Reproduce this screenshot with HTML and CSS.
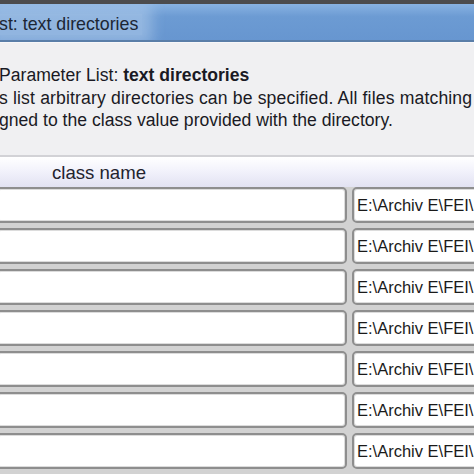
FILE: index.html
```html
<!DOCTYPE html>
<html>
<head>
<meta charset="utf-8">
<link rel="stylesheet" href="styles.css">
</head>
<body>
<div class="window">
  <div class="titlebar"><span class="title">st: text directories</span></div>
  <div class="desc">
    <div class="line">Parameter List: <b>text directories</b></div>
    <div class="line wide">s list arbitrary directories can be specified. All files matching</div>
    <div class="line">gned to the class value provided with the directory.</div>
  </div>
  <div class="table">
    <div class="thead"><span class="th">class name</span></div>
    <div class="rows">
      <div class="cell"></div><div class="cell path">E:\Archiv E\FEI\</div>
      <div class="cell"></div><div class="cell path">E:\Archiv E\FEI\</div>
      <div class="cell"></div><div class="cell path">E:\Archiv E\FEI\</div>
      <div class="cell"></div><div class="cell path">E:\Archiv E\FEI\</div>
      <div class="cell"></div><div class="cell path">E:\Archiv E\FEI\</div>
      <div class="cell"></div><div class="cell path">E:\Archiv E\FEI\</div>
      <div class="cell"></div><div class="cell path">E:\Archiv E\FEI\</div>
    </div>
  </div>
</div>
</body>
</html>
```
FILE: styles.css
```css
html, body {
  margin: 0;
  padding: 0;
  width: 474px;
  height: 474px;
  overflow: hidden;
  background: #cfcfcf;
}
.window {
  width: 474px;
  height: 474px;
  overflow: hidden;
  font-family: "Liberation Sans", Arial, sans-serif;
}
.titlebar {
  height: 36px;
  border-top: 4px solid #4c4c4e;
  border-bottom: 2px solid #5a7ea8;
  box-shadow: 0 1px 0 #c4d2e2;
  background: linear-gradient(#88b2e2, #6c9bd3 35%, #6796d0 100%);
  display: flex;
  align-items: center;
  overflow: hidden;
  white-space: nowrap;
}
.title {
  font-size: 17.8px;
  color: #1c2634;
  margin-left: -1px;
  margin-top: 4px;
  padding: 0 4px 0 0;
  background: rgba(196, 218, 242, 0.45);
  box-shadow: 0 0 14px 10px rgba(196, 218, 242, 0.45);
}
.desc {
  background: #f0f0f2;
  padding: 21px 0 0 0;
  height: 91px;
  border-top: 1px solid #f7f7f9;
  border-bottom: 2px solid #d2d2d6;
  overflow: hidden;
}
.line {
  font-size: 17.6px;
  line-height: 22.5px;
  color: #1a1a24;
  white-space: nowrap;
  margin-left: -1px;
}
.wide {
  letter-spacing: 0.15px;
}
.table {
  background: #fff;
}
.thead {
  height: 30px;
  background: linear-gradient(#ffffff, #f1f1fb 50%, #e2e2f2);
  display: flex;
  align-items: center;
}
.th {
  font-size: 18.6px;
  color: #23232e;
  margin-left: 52px;
  margin-top: 2px;
}
.rows {
  display: grid;
  grid-template-columns: 351px 130px;
  grid-auto-rows: 36px;
  gap: 5px 5px;
  margin-left: -4px;
  background: #d2d2d2;
  padding-bottom: 6px;
}
.cell {
  background: #fff;
  border: 2px solid #8e8e8e;
  border-radius: 5px;
  box-shadow: inset 0 0 0 1px #dcdcdc;
  box-sizing: border-box;
  display: flex;
  align-items: center;
  overflow: hidden;
  white-space: nowrap;
}
.path {
  font-size: 16.5px;
  color: #1a1a1a;
  padding-left: 3px;
  padding-top: 1px;
}
```
